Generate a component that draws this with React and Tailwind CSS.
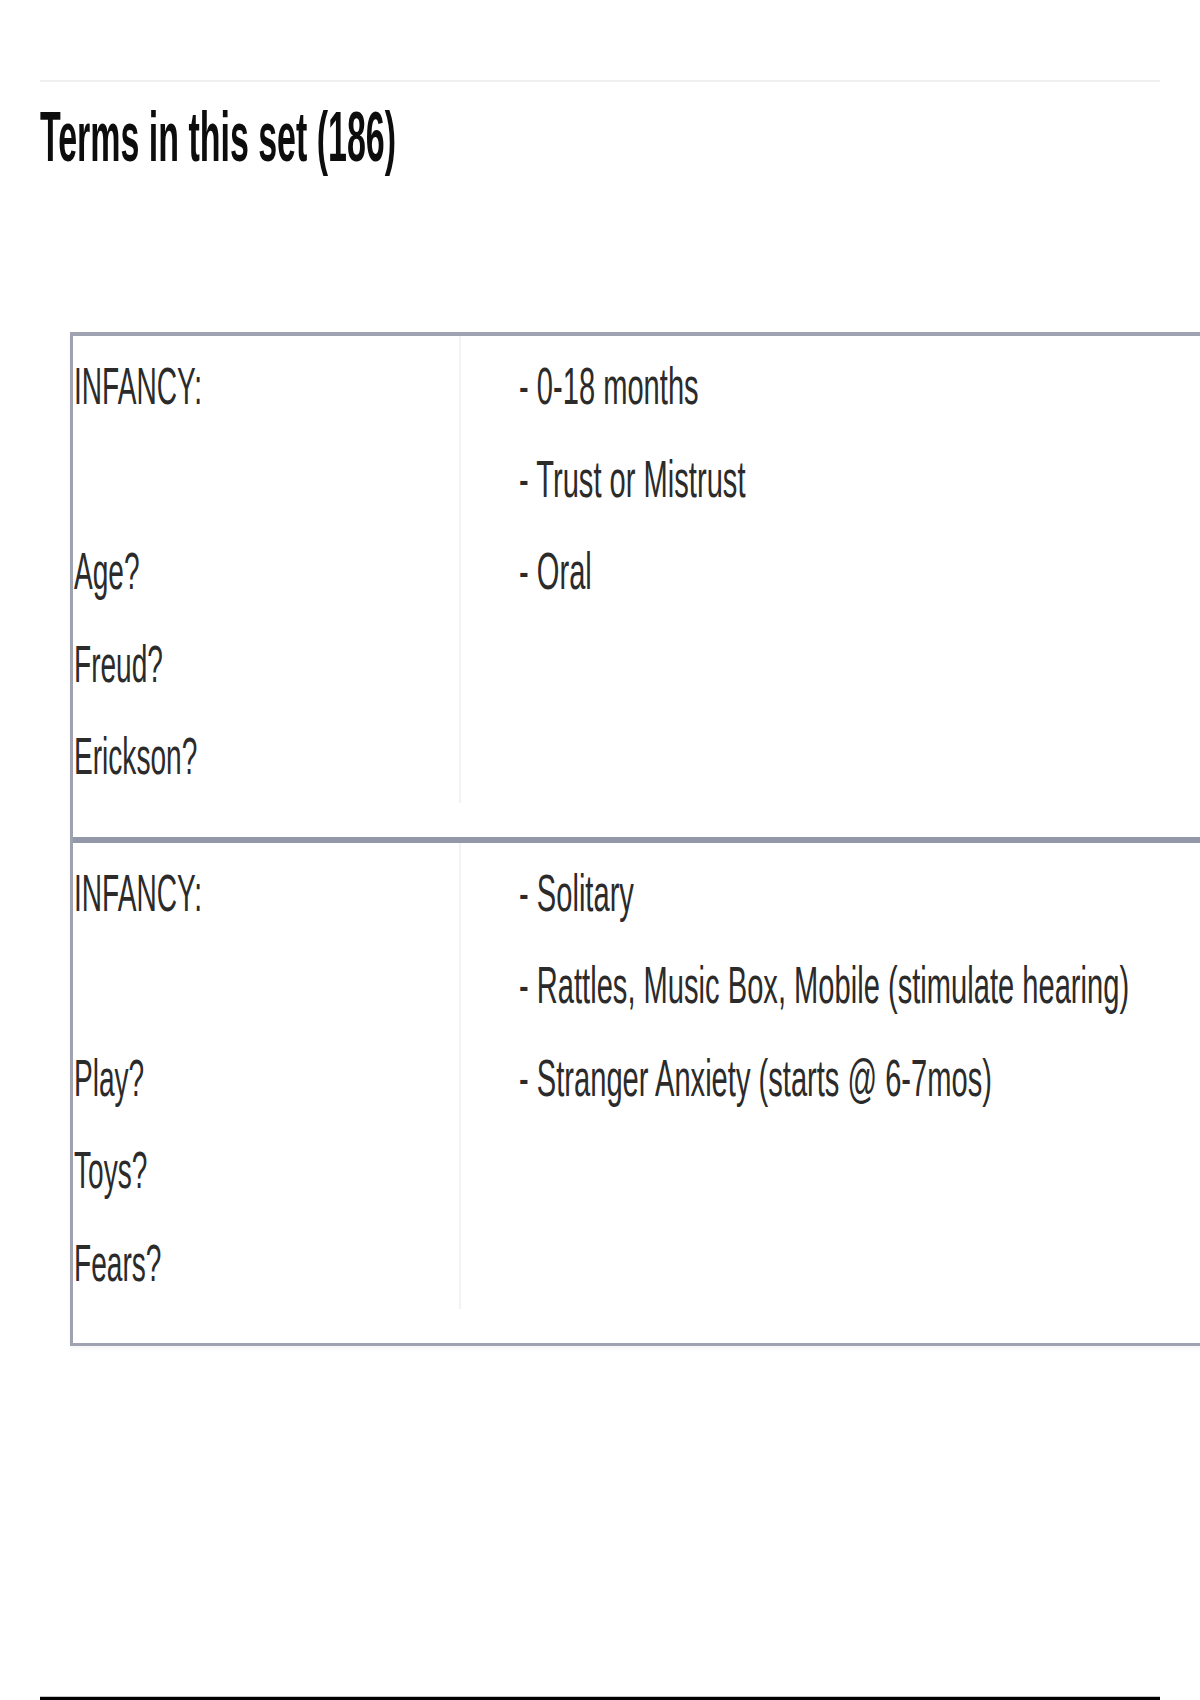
import React from 'react';

const rows = [
  {
    term: ['INFANCY:', '', 'Age?', 'Freud?', 'Erickson?'],
    definition: ['- 0-18 months', '- Trust or Mistrust', '- Oral'],
  },
  {
    term: ['INFANCY:', '', 'Play?', 'Toys?', 'Fears?'],
    definition: [
      '- Solitary',
      '- Rattles, Music Box, Mobile (stimulate hearing)',
      '- Stranger Anxiety (starts @ 6-7mos)',
    ],
  },
];

const Line = ({ text, wide }) => (
  <div className="h-[92.5px] leading-[92.5px] whitespace-nowrap">
    <span className={`inline-block origin-left ${wide ? 'scale-x-[0.56]' : 'scale-x-[0.54]'}`}>
      {text || '\u00a0'}
    </span>
  </div>
);

const App = () => {
  return (
    <div className="w-[1200px] h-[1700px] bg-white overflow-hidden flex flex-col font-['Liberation_Sans',Arial,sans-serif]">
      {/* Header rule + title */}
      <div className="mx-[40px] mt-[80px] border-t-2 border-[#f0f0f0]" />
      <h2 className="ml-[40px] mt-[20px] text-[70px] leading-[70px] font-bold text-[#0d0d0d] whitespace-nowrap">
        <span className="inline-block origin-left scale-x-[0.485]">Terms in this set (186)</span>
      </h2>

      {/* Term table */}
      <div className="ml-[70px] mt-[160px] w-[1160px] border-t-4 border-l-[3px] border-b-[3px] border-[#9ea2b1] shadow-[0_3px_4px_rgba(0,0,0,0.04)]">
        {rows.map((row, idx) => (
          <div
            key={idx}
            className={`flex pb-[34px] ${idx > 0 ? 'border-t-[6px] border-[#9497a8]' : ''}`}
          >
            <div className="w-[388px] shrink-0 pt-[4px] pl-[1px] border-r-2 border-[#f2f3f5] text-[52px] text-[#2b2b2b]">
              {row.term.map((t, i) => (
                <Line key={i} text={t} />
              ))}
            </div>
            <div className="flex-1 min-w-0 pt-[4px] pl-[58px] text-[52px] text-[#2b2b2b]">
              {row.definition.map((d, i) => (
                <Line key={i} text={d} wide />
              ))}
            </div>
          </div>
        ))}
      </div>

      {/* Bottom rule */}
      <div className="mt-auto mx-[40px] border-t border-[#c8c8c8]" />
      <div className="mx-[40px] h-[3px] bg-black" />
    </div>
  );
};

export default App;
